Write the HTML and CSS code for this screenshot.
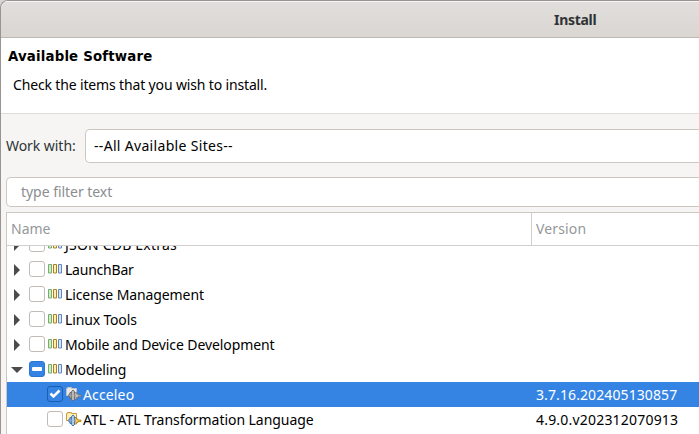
FILE: index.html
```html
<!DOCTYPE html>
<html lang="en">
<head>
<meta charset="utf-8">
<title>Install</title>
<link rel="stylesheet" href="styles.css">
</head>
<body>
<svg class="defs" width="0" height="0">
  <symbol id="category" viewBox="0 0 14 10">
    <path fill="#d8ecb0" stroke="#6fac80" d="M.5.5h3v8.500h-3z"/>
    <path fill="#fdf0b0" stroke="#b08018" d="M5.500.5h3v8.500h-3z"/>
    <path fill="#d5e6fa" stroke="#6286c0" d="M10.500.5h3v8.500h-3z"/>
  </symbol>
  <symbol id="right" viewBox="0 0 6 12"><path fill="#4b4b4b" d="M0 0l6 6-6 6z"/></symbol>
  <symbol id="down" viewBox="0 0 12 6"><path fill="#4b4b4b" d="M0 0h12L6 6z"/></symbol>
  <symbol id="feature" viewBox="0 0 16 16">
    <path class="folder" d="M.5 9.500v-7h1v-1h4v1h5v7z"/>
    <path class="shaft" d="M8 6.500h2.500v1.500h1.500v1h3v1.500h-3v1h-1.500v1.500H8z"/>
    <path class="plug" d="M5.500 6.500h-1.500v1.500h-1v3h1v1.500h1.500z"/>
    <ellipse class="plug" cx="7" cy="9.500" rx="1.900" ry="5.500"/>
  </symbol>
</svg>
<main class="window">
  <header class="titlebar"><span class="title">Install</span></header>
  <section class="banner">
    <h1 class="heading">Available Software</h1>
    <p class="hint">Check the items that you wish to install.</p>
  </section>
  <section class="content">
    <div class="site-row">
      <span class="site-label">Work with:</span>
      <div class="combo"><span class="combo-text">--All Available Sites--</span></div>
    </div>
    <div class="filter"><span class="filter-text">type filter text</span></div>
    <div class="table">
      <div class="head"><div class="head-name"><span class="h-name">Name</span></div><div class="head-version"><span class="h-version">Version</span></div></div>
      <div class="rows">
        <div class="row"><svg class="right"><use href="#right"/></svg><i class="box"></i><svg class="cat"><use href="#category"/></svg><span class="t-json">JSON CDB Extras</span></div>
        <div class="row"><svg class="right"><use href="#right"/></svg><i class="box"></i><svg class="cat"><use href="#category"/></svg><span class="t-launch">LaunchBar</span></div>
        <div class="row"><svg class="right"><use href="#right"/></svg><i class="box"></i><svg class="cat"><use href="#category"/></svg><span class="t-license">License Management</span></div>
        <div class="row"><svg class="right"><use href="#right"/></svg><i class="box"></i><svg class="cat"><use href="#category"/></svg><span class="t-linux">Linux Tools</span></div>
        <div class="row"><svg class="right"><use href="#right"/></svg><i class="box"></i><svg class="cat"><use href="#category"/></svg><span class="t-mobile">Mobile and Device Development</span></div>
        <div class="row"><svg class="down"><use href="#down"/></svg><i class="box mixed"></i><svg class="cat"><use href="#category"/></svg><span class="t-model">Modeling</span></div>
        <div class="row child selected"><div class="cell"><i class="box checked"><svg viewBox="0 0 14 14"><path d="M2.500 6.500l3 3 6-6"/></svg></i><svg class="feat gray"><use href="#feature"/></svg><span class="t-acc">Acceleo</span></div><span class="v1">3.7.16.202405130857</span></div>
        <div class="row child"><div class="cell"><i class="box"></i><svg class="feat"><use href="#feature"/></svg><span class="t-atl">ATL - ATL Transformation Language</span></div><span class="v2">4.9.0.v202312070913</span></div>
      </div>
    </div>
  </section>
</main>
</body>
</html>
```
FILE: styles.css
```css
* { box-sizing: border-box; }
body { margin: 0; width: 699px; height: 434px; overflow: hidden; background: #d8d6d5; font: 14px/20px "Noto Sans", sans-serif; color: #000; white-space: nowrap; }
.defs { display: block; }
.window { height: 434px; border: solid #979493; border-width: 1px 0 0 1px; border-top-left-radius: 8px; overflow: hidden; background: #f6f5f4; }
.titlebar { height: 37px; padding: 9px 0 0 553px; background: linear-gradient(#e1dedc, #dad6d2); border-bottom: 1px solid #bfb8b1; box-shadow: inset 0 1px #f6f5f4; color: #2e3436; font-weight: 700; }
.title { letter-spacing: -.3px; }
.banner { height: 76px; padding: 9px 0 0 7px; background: #fff; border-bottom: 1px solid #dedbd8; }
.heading { margin: 0; font: 700 13.330px/20px "DejaVu Sans", sans-serif; letter-spacing: .17px; }
.hint { margin: 8px 0 0 5px; letter-spacing: -.15px; }
.content { padding: 15px 0 0 5px; }
.site-row { display: flex; align-items: center; height: 34px; color: #2e3436; }
.site-label { width: 79px; letter-spacing: -.05px; }
.combo { flex: 1; height: 34px; padding: 6px 0 0 8px; border: 1px solid #cdc7c2; border-right: 0; border-radius: 5px 0 0 5px; background: #fff; color: #000; letter-spacing: .32px; }
.filter { height: 30px; margin: 14px 0 5px; padding: 4px 0 0 14px; border: 1px solid #cdc7c2; border-right: 0; border-radius: 5px 0 0 5px; background: #fff; color: #8b8e8f; letter-spacing: -.04px; }
.table { height: 222px; border: solid #cdc7c2; border-width: 1px 0 0 1px; background: #fff; overflow: hidden; }
.head { display: flex; height: 33px; border-bottom: 1px solid #d2cecb; color: #959899; }
.head-name { width: 525px; padding: 6px 0 0 4px; border-right: 1px solid #d2cecb; }
.head-version { padding: 6px 0 0 4px; letter-spacing: .15px; }
.rows { height: 188px; overflow: hidden; }
.row { display: flex; align-items: center; height: 25px; padding: 0 0 1px 7px; }
.row:first-child { margin-top: -14px; }
.row span { margin-top: 2px; }
.right { width: 6px; height: 12px; margin: 2px 9px 0 0; }
.down { width: 12px; height: 6px; margin: 2px 6px 0 -3px; }
.box { width: 16px; height: 16px; border: 1px solid #c3bcb6; border-radius: 3px; background: #fff; flex: none; }
.mixed { display: grid; place-items: center; background: #3584e4; border-color: #2a76d2; }
.mixed::after { content: ""; width: 10px; height: 4px; border-radius: 1px; background: #fff; }
.checked { background: #3584e4; border-color: #185fb4; }
.checked svg { display: block; width: 14px; height: 14px; fill: none; stroke: #fff; stroke-width: 2.500; }
.cat { width: 14px; height: 10px; margin: 0 3px; }
.t-json { letter-spacing: .2px; }
.t-launch { letter-spacing: -.22px; }
.t-license, .t-mobile { letter-spacing: -.1px; }
.t-linux { letter-spacing: -.15px; }
.t-model { letter-spacing: -.1px; }
.t-acc { letter-spacing: .14px; }
.t-atl { letter-spacing: -.05px; }
.v1 { letter-spacing: .1px; }
.v2 { letter-spacing: .2px; }
.selected { background: #3584e4; color: #fff; }
.child { padding-left: 40px; }
.cell { display: flex; align-items: center; width: 489px; }
.feat { width: 16px; height: 16px; margin: 0 1px 0 3px; --a: #fff0b5; --b: #c89b3b; --c: #a8c8ef; --d: #386ba9; --e: #f3cd58; --f: #b07a12; }
.gray { --a: #e9e9e9; --b: #c2c2c2; --c: #b8b8b8; --d: #686868; --e: #c5c5c5; --f: #777; }
.folder { fill: var(--a); stroke: var(--b); }
.shaft { fill: var(--e); stroke: var(--f); stroke-width: .8; }
.plug { fill: var(--c); stroke: var(--d); stroke-width: .9; }
```
